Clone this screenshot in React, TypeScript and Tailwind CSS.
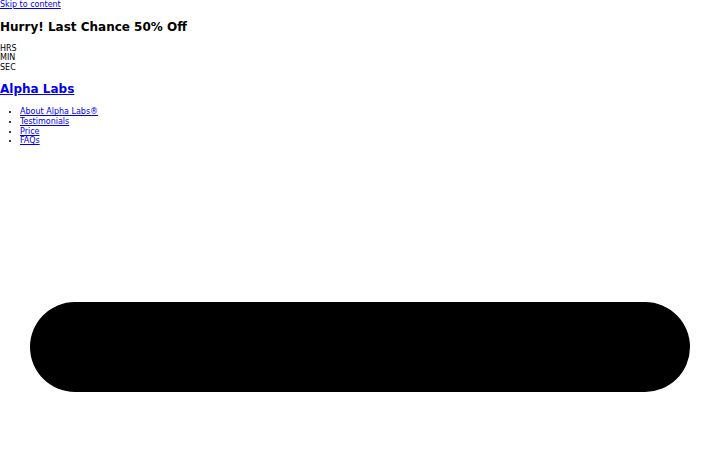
export default function App() {
  const links = ["About Alpha Labs®", "Testimonials", "Price", "FAQs"];

  return (
    <div className="min-h-screen bg-white font-['DejaVu_Sans',sans-serif] text-[8px] leading-[9.6px] text-black">
      <a href="#content" className="text-[#0000ee] underline">
        Skip to content
      </a>

      {/* countdown banner */}
      <h2 className="my-[10px] text-[12px] leading-[14px] font-bold">Hurry! Last Chance 50% Off</h2>
      <div>
        <div>HRS</div>
        <div>MIN</div>
        <div>SEC</div>
      </div>

      {/* header */}
      <p className="mt-[10px] mb-[11px] text-[12px] leading-[14px] font-bold">
        <a href="#" className="text-[#0000ee] underline">
          Alpha Labs
        </a>
      </p>
      <ul className="my-[11px] list-disc pl-[20px] leading-[9.7px]">
        {links.map((l) => (
          <li key={l}>
            <a href="#" className="text-[#0000ee] underline">
              {l}
            </a>
          </li>
        ))}
      </ul>

      <div className="mx-[30px] mt-[156px] h-[90px] rounded-full bg-black" />
    </div>
  );
}
